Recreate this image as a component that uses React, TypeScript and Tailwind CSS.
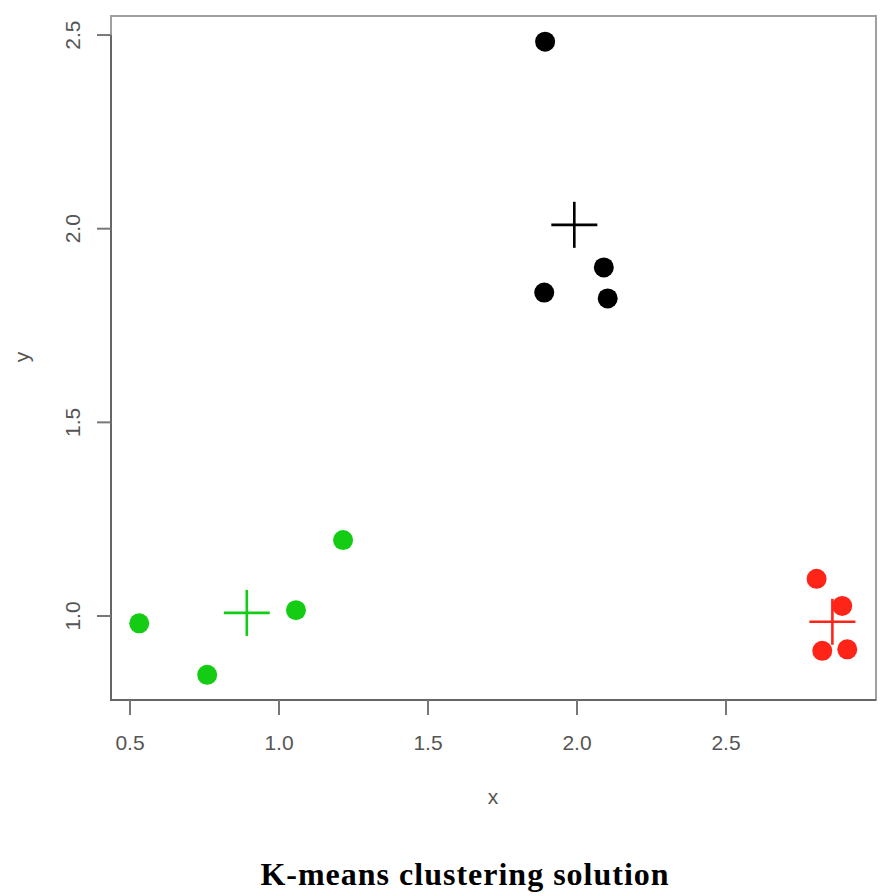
import React from "react";

// --- scale from data to svg pixels
const px = (x: number) => 130 + (x - 0.5) * 298;
const py = (y: number) => 616 - (y - 1) * 387.3;

type Pt = [number, number];

const clusters: { color: string; points: Pt[]; center: Pt }[] = [
  {
    color: "#000000",
    points: [
      [1.893, 2.483],
      [2.09, 1.9],
      [1.89, 1.835],
      [2.103, 1.82],
    ],
    center: [1.991, 2.01],
  },
  {
    color: "#14cc14",
    points: [
      [0.531, 0.981],
      [0.759, 0.848],
      [1.057, 1.015],
      [1.215, 1.196],
    ],
    center: [0.892, 1.008],
  },
  {
    color: "#ff2418",
    points: [
      [2.804, 1.096],
      [2.89, 1.026],
      [2.823, 0.91],
      [2.907, 0.914],
    ],
    center: [2.857, 0.985],
  },
];

const xTicks = [0.5, 1.0, 1.5, 2.0, 2.5];
const yTicks = [1.0, 1.5, 2.0, 2.5];

const Plot = () => {
  return (
    <svg
      width="896"
      height="858"
      viewBox="0 0 896 858"
      className="block shrink-0 font-['Liberation_Sans',Arial,sans-serif]"
    >
      {/* --- plot box --- */}
      <rect x="111" y="16" width="765" height="684" fill="none" stroke="#a0a0a0" strokeWidth="2" />

      {/* --- axes --- */}
      <line x1="111" y1="700" x2="876" y2="700" stroke="#666" strokeWidth="2" />
      <line x1="111" y1={py(2.5)} x2="111" y2="701" stroke="#666" strokeWidth="2" />

      {xTicks.map((t) => (
        <g key={"x" + t}>
          <line x1={px(t)} y1="700" x2={px(t)} y2="715" stroke="#777" strokeWidth="2" />
          <text x={px(t)} y="750" textAnchor="middle" fontSize="21" fill="#555">
            {t.toFixed(1)}
          </text>
        </g>
      ))}

      {yTicks.map((t) => (
        <g key={"y" + t}>
          <line x1="97" y1={py(t)} x2="111" y2={py(t)} stroke="#777" strokeWidth="2" />
          <text
            x="80"
            y={py(t)}
            textAnchor="middle"
            fontSize="21"
            fill="#555"
            transform={`rotate(-90 80 ${py(t)})`}
          >
            {t.toFixed(1)}
          </text>
        </g>
      ))}

      {/* --- axis titles --- */}
      <text x="493" y="804" textAnchor="middle" fontSize="21" fill="#555">
        x
      </text>
      <text x="29" y="357" textAnchor="middle" fontSize="21" fill="#555" transform="rotate(-90 29 357)">
        y
      </text>

      {/* --- cluster centers --- */}
      {clusters.map((c) => (
        <g key={"c" + c.color} stroke={c.color} strokeWidth="2.6">
          <line x1={px(c.center[0]) - 23} y1={py(c.center[1])} x2={px(c.center[0]) + 23} y2={py(c.center[1])} />
          <line x1={px(c.center[0])} y1={py(c.center[1]) - 23} x2={px(c.center[0])} y2={py(c.center[1]) + 23} />
        </g>
      ))}

      {/* --- points --- */}
      {clusters.map((c) =>
        c.points.map((p, i) => (
          <circle key={c.color + i} cx={px(p[0])} cy={py(p[1])} r="10" fill={c.color} />
        ))
      )}
    </svg>
  );
};

export default function App() {
  return (
    <div className="w-[896px] h-[896px] bg-white flex flex-col overflow-hidden">
      <Plot />
      <div className="pl-[34px] text-center text-[32px] leading-none tracking-[1px] font-bold text-black font-['Liberation_Serif','Times_New_Roman',serif]">
        K-means clustering solution
      </div>
    </div>
  );
}
